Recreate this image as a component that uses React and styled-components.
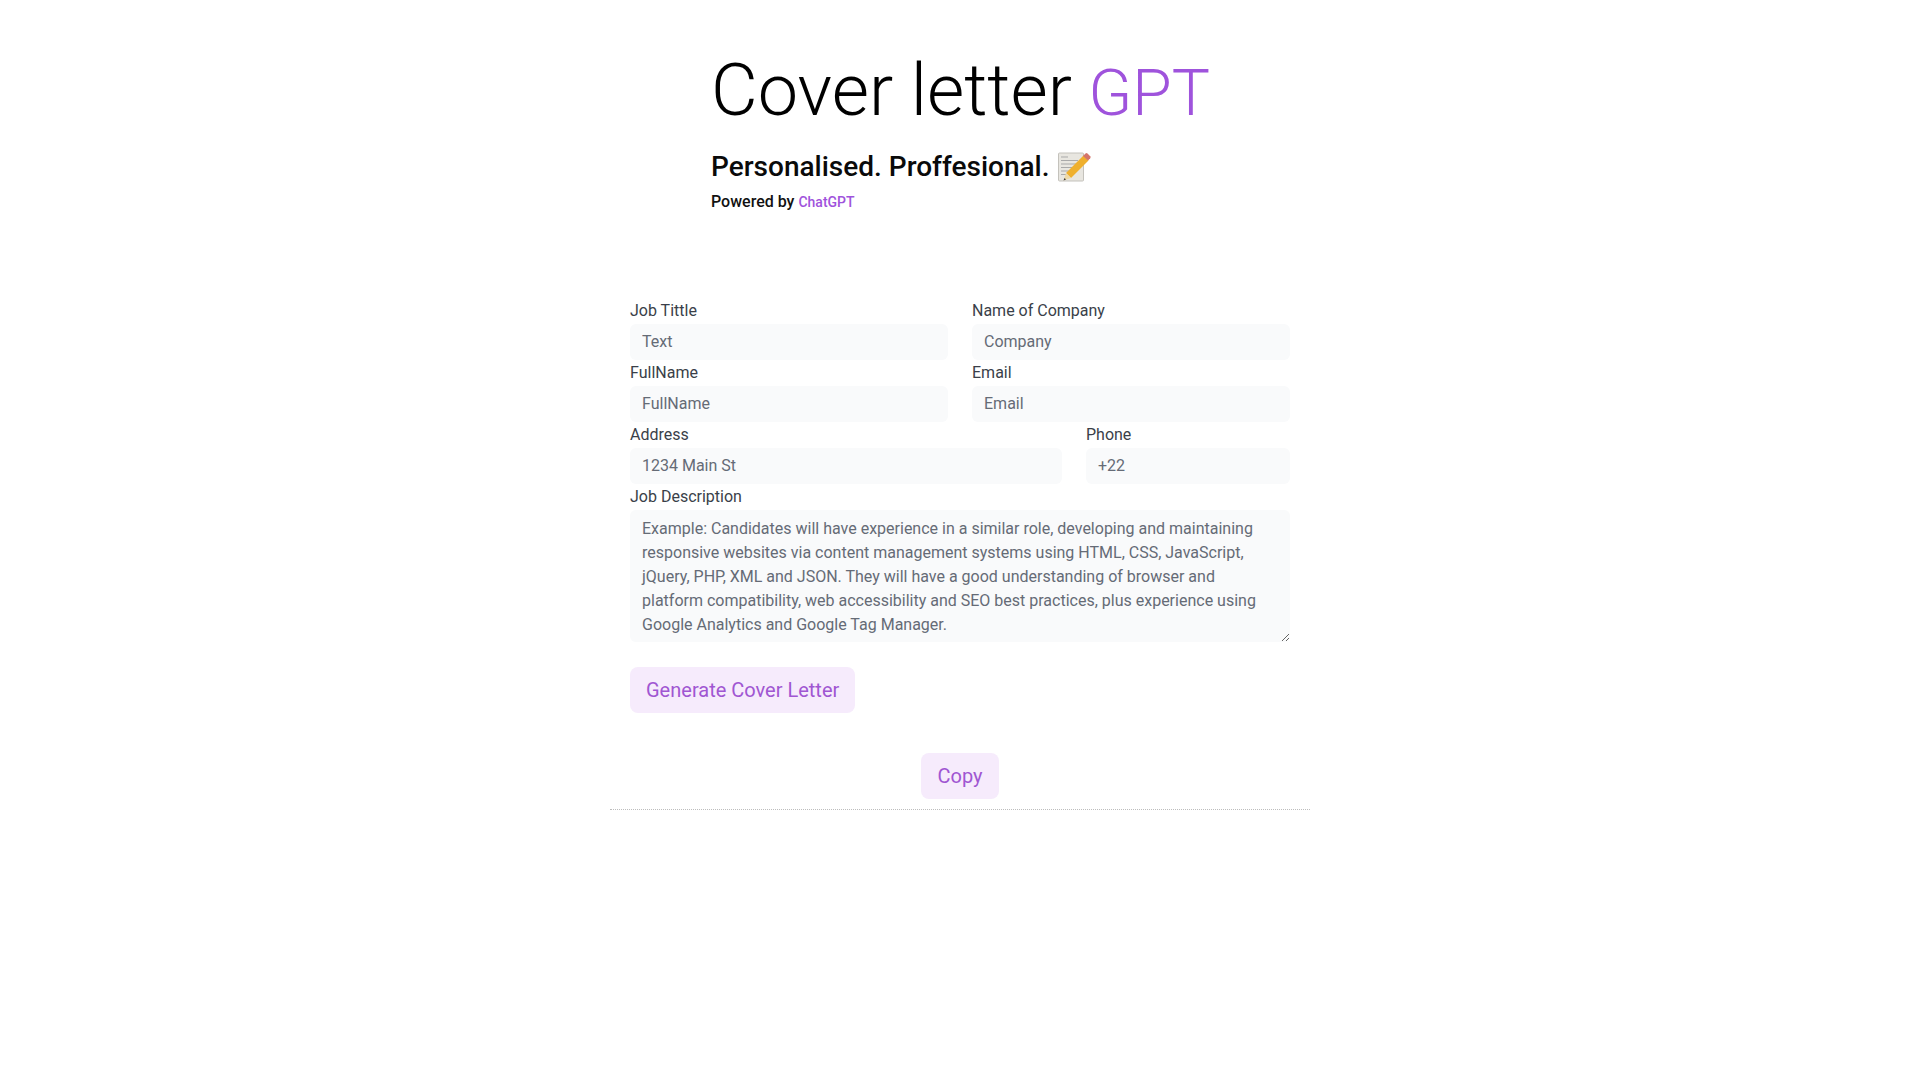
import React from 'react';
import styled, { createGlobalStyle } from 'styled-components';

const Global = createGlobalStyle`
  * { box-sizing: border-box; }
  html, body { margin: 0; padding: 0; background: #fff; }
  body { font-family: Roboto, "Liberation Sans", sans-serif; color: #1a202c; }
`;
const Page = styled.main`
  width: 700px;
  margin: 0 auto;
  display: flex;
  flex-direction: column;
`;
const Header = styled.header`
  width: 500px;
  margin: 0 auto;
  padding-top: 48px;
  height: 298.5px;
  padding-left: 1px;
`;
const Title = styled.h1`
  margin: 0;
  font-size: 72px;
  font-weight: 300;
  line-height: 86px;
  color: #000;
  white-space: nowrap;
`;
const TitleAccent = styled.span`
  font-size: 64px;
  margin-left: -1px;
  color: #9f53dc;
`;
const Subtitle = styled.h2`
  margin: 11px 0 0;
  font-size: 28px;
  font-weight: 500;
  line-height: 38px;
  color: #0a0a0a;
  display: flex;
  align-items: center;
  gap: 8px;
`;
const Emoji = styled.svg`
  width: 33px;
  height: 30px;
  flex: none;
`;
const Powered = styled.p`
  margin: 4px 0 0;
  font-size: 16px;
  font-weight: 500;
  line-height: 24px;
  color: #111;
`;
const Accent = styled.span`
  font-size: 14px;
  color: #9f53dc;
`;
const Form = styled.form`
  padding: 0 20px;
  display: flex;
  flex-direction: column;
`;
const Row = styled.div`
  display: grid;
  grid-template-columns: ${p => p.$cols || '1fr 1fr'};
  gap: 24px;
`;
const Field = styled.label`
  display: flex;
  flex-direction: column;
  min-width: 0;
`;
const LabelText = styled.span`
  font-size: 16px;
  line-height: 24px;
  margin-bottom: 1.5px;
  color: #3a3f49;
`;
const Input = styled.input`
  height: 36px;
  margin-bottom: 0.5px;
  border: 0;
  border-radius: 6px;
  background: #f9fafb;
  padding: 0 12px 2px;
  font: 400 16px Roboto, sans-serif;
  outline: none;
  &::placeholder { color: #656b76; opacity: 1; }
`;
const Area = styled.textarea`
  height: 132px;
  margin-bottom: 0.5px;
  border: 0;
  border-radius: 6px;
  background: #f9fafb;
  padding: 7px 12px 8px;
  font: 400 16px/24px Roboto, sans-serif;
  outline: none;
  display: block;
  &::placeholder { color: #656b76; opacity: 1; }
`;
const Button = styled.button`
  height: 46px;
  border: 0;
  border-radius: 8px;
  background: #f6ebfc;
  color: #a056d2;
  padding: 0 16px;
  font: 400 20px Roboto, sans-serif;
`;
const GenerateRow = styled.div`
  margin-top: 24px;
  display: flex;
`;
const CopyRow = styled.div`
  margin-top: 40px;
  display: flex;
  justify-content: center;
`;
const Rule = styled.hr`
  width: 100%;
  margin: 10px 0 0;
  border: 0;
  border-top: 1px dotted #bdbdbd;
`;
const desc = 'Example: Candidates will have experience in a similar role, developing and maintaining responsive websites via content management systems using HTML, CSS, JavaScript, jQuery, PHP, XML and JSON. They will have a good understanding of browser and platform compatibility, web accessibility and SEO best practices, plus experience using Google Analytics and Google Tag Manager.';

function MemoIcon() {
  return (
    <Emoji viewBox="0 0 33 30" aria-label="memo">
      <rect x="0.5" y="1" width="25" height="28" rx="1" fill="#e8e6e0" stroke="#c4c2bc" />
      <path d="M3 5h7M3 8.5h17M3 12h15M3 15.500h12M3 19h9M3 22.500h6" stroke="#a9a9a9" strokeWidth="1" fill="none" />
      <path d="M25.500 3.500 L30.500 8.500 L13 26 L8 21 Z" fill="#efb02e" />
      <path d="M8 21 L13 26 L5.500 28.500 Z" fill="#eed9a8" />
      <path d="M6.600 26 L8 27.400 L5.500 28.500 Z" fill="#3a3a3a" />
      <path d="M25 4 L27.500 1.500 Q28.500 0.700 29.500 1.500 L32.200 4.200 Q33 5.200 32.200 6.200 L30 8.500 Z" fill="#d4756b" />
    </Emoji>
  );
}

export default function App() {
  return (
    <Page>
      <Global />
      <Header>
        <Title>Cover letter <TitleAccent>GPT</TitleAccent></Title>
        <Subtitle>Personalised. Proffesional. <MemoIcon /></Subtitle>
        <Powered>Powered by <Accent>ChatGPT</Accent></Powered>
      </Header>
      <Form>
        <Row>
          <Field><LabelText>Job Tittle</LabelText><Input placeholder="Text" /></Field>
          <Field><LabelText>Name of Company</LabelText><Input placeholder="Company" /></Field>
        </Row>
        <Row>
          <Field><LabelText>FullName</LabelText><Input placeholder="FullName" /></Field>
          <Field><LabelText>Email</LabelText><Input placeholder="Email" /></Field>
        </Row>
        <Row $cols="432px 204px">
          <Field><LabelText>Address</LabelText><Input placeholder="1234 Main St" /></Field>
          <Field><LabelText>Phone</LabelText><Input placeholder="+22" /></Field>
        </Row>
        <Field><LabelText>Job Description</LabelText><Area placeholder={desc} /></Field>
        <GenerateRow><Button type="button">Generate Cover Letter</Button></GenerateRow>
      </Form>
      <CopyRow><Button type="button">Copy</Button></CopyRow>
      <Rule />
    </Page>
  );
}
